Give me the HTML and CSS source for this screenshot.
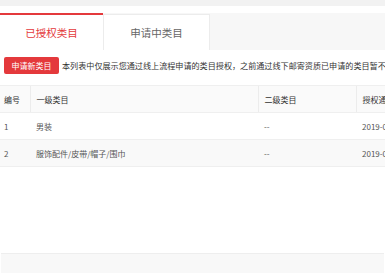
FILE: index.html
```html
<!DOCTYPE html>
<html lang="zh-CN">
  <head>
    <meta charset="UTF-8" />
    <meta name="viewport" content="width=device-width, initial-scale=1.0" />
    <title>类目管理</title>
    <link rel="stylesheet" href="styles.css">
  </head>
  <body>
    <div class="top-strip"></div>
    <div class="page">
      <div class="tabs">
        <div class="tab active">已授权类目</div>
        <div class="tab">申请中类目</div>
      </div>

      <div class="content">
        <div class="toolbar">
          <button class="btn-apply">申请新类目</button>
          <span class="tip">本列表中仅展示您通过线上流程申请的类目授权，之前通过线下邮寄资质已申请的类目暂不展示</span>
        </div>

        <table class="cat-table">
          <colgroup>
            <col class="c-no" />
            <col class="c-first" />
            <col class="c-second" />
            <col class="c-date" />
          </colgroup>
          <thead>
            <tr>
              <th>编号</th>
              <th>一级类目</th>
              <th>二级类目</th>
              <th>授权通过时间</th>
            </tr>
          </thead>
          <tbody>
            <tr>
              <td>1</td>
              <td>男装</td>
              <td>--</td>
              <td>2019-03-12</td>
            </tr>
            <tr class="odd">
              <td>2</td>
              <td>服饰配件/皮带/帽子/围巾</td>
              <td>--</td>
              <td>2019-03-12</td>
            </tr>
          </tbody>
        </table>
      </div>

      <div class="footer-bar"></div>
    </div>
  </body>
</html>
```

FILE: styles.css
```css
body {
  margin: 0;
  padding: 0;
  font-family: "Noto Sans CJK SC", "Liberation Sans", sans-serif;
  background-color: #fff;
  color: #333;
  width: 385px;
  height: 273px;
  overflow: hidden;
}

.top-strip {
  height: 6px;
  background-color: #f2f2f2;
}

.page {
  margin-top: 7px;
  display: flex;
  flex-direction: column;
  height: 260px;
}

.tabs {
  display: flex;
  height: 37px;
  background-color: #f7f7f7;
}

.tab {
  box-sizing: border-box;
  width: 107px;
  display: flex;
  align-items: center;
  justify-content: center;
  font-size: 10.5px;
  color: #666;
  background-color: #fff;
  border: 1px solid #ececec;
  border-bottom: none;
  margin-top: 1px;
}

.tab.active {
  width: 103px;
  margin-top: 0;
  color: #e4393c;
  border: none;
  border-top: 2px solid #e4393c;
}

.content {
  flex: 1;
  overflow: hidden;
}

.toolbar {
  display: flex;
  align-items: center;
  gap: 3px;
  padding: 7px 0 11px 4px;
  white-space: nowrap;
}

.btn-apply {
  flex-shrink: 0;
  width: 55px;
  height: 17px;
  padding: 0;
  border: none;
  border-radius: 2px;
  background-color: #e4393c;
  color: #fff;
  font-family: inherit;
  font-size: 8px;
  cursor: pointer;
}

.tip {
  font-size: 8.1px;
  color: #333;
}

.cat-table {
  width: 440px;
  border-collapse: collapse;
  table-layout: fixed;
  font-size: 8px;
}

.c-no { width: 30px; }
.c-first { width: 228px; }
.c-second { width: 98px; }
.c-date { width: 84px; }

.cat-table th,
.cat-table td {
  height: 26px;
  padding: 0 0 0 6px;
  text-align: left;
  white-space: nowrap;
  overflow: hidden;
  border-bottom: 1px solid #efefef;
}

.cat-table th {
  font-weight: normal;
  color: #333;
  background-color: #fafafa;
  border-left: 1px solid #ececec;
  border-top: 1px solid #efefef;
}

.cat-table th:first-child {
  border-left: none;
  padding-left: 4px;
}

.cat-table td {
  color: #555;
}

.cat-table td:first-child {
  padding-left: 4px;
}

.cat-table tr.odd td {
  background-color: #f9f9f9;
}

.footer-bar {
  height: 19px;
  margin: 0 1px;
  background-color: #f8f8f8;
  border-top: 1px solid #eee;
}
```
